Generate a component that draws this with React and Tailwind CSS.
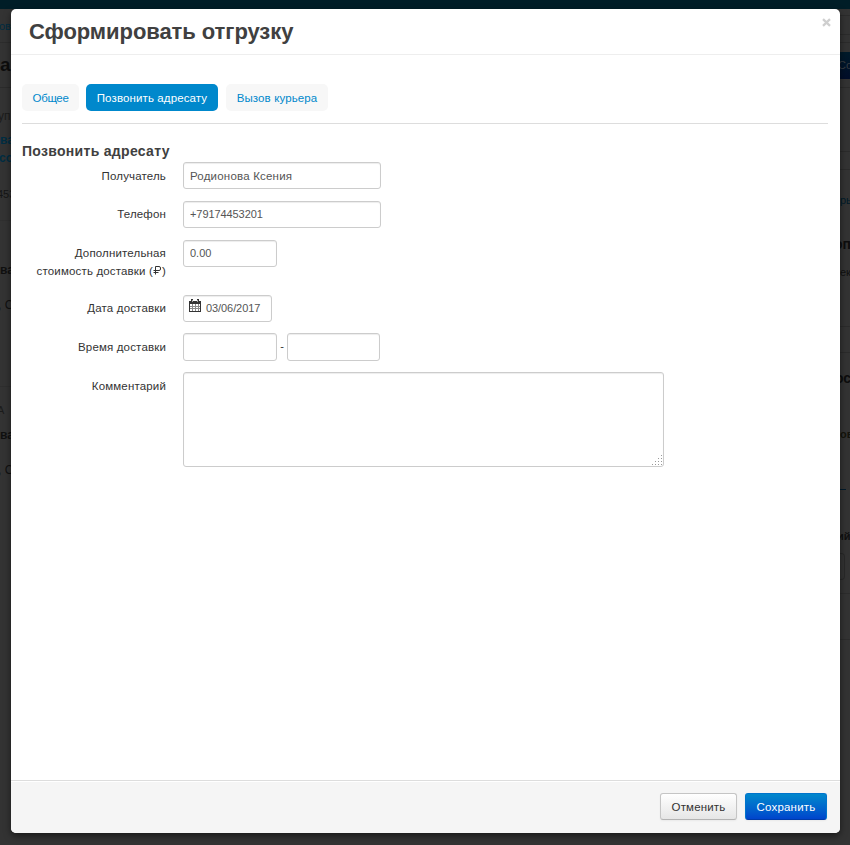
import React from "react";

const leftRows = [
  { text: "ов", cls: "h-[33px] mt-px -ml-px border-b border-[#2c2c2c] leading-[32px] text-[11px] text-[#002d42]" },
  { text: "а", cls: "h-[45px] border-b border-[#2b2b2b] leading-[44px] text-[19px] font-bold text-[#0d0d0d]" },
  { text: "уп", cls: "h-[18px] mt-[19px] -ml-0.5 leading-[18px] text-[12px] text-[#1b1b1b]" },
  { text: "ва", cls: "h-[18px] mt-[6px] leading-[18px] text-[12px] font-bold text-[#002d42]" },
  { text: "со", cls: "h-[18px] leading-[18px] -ml-px text-[12px] font-bold text-[#002d42]" },
  { text: "453", cls: "h-[54px] pt-[18px] -ml-[3px] border-b border-[#2f2f2f] leading-[18px] text-[11px] text-[#151515]" },
  { text: "ва", cls: "h-[18px] mt-[40px] leading-[18px] text-[12px] font-bold text-[#101010]" },
  { text: ", С", cls: "h-[18px] mt-[17px] -ml-[2px] leading-[18px] text-[12px] text-[#101010]" },
  { text: "", cls: "h-px mt-[72px] bg-[#2e2e2e]" },
  { text: "А", cls: "h-[18px] mt-[14px] -ml-[3px] leading-[18px] text-[11px] text-[#1b1b1b]" },
  { text: "ва", cls: "h-[18px] mt-[7px] leading-[18px] text-[12px] font-bold text-[#101010]" },
  { text: ", С", cls: "h-[18px] mt-[17px] -ml-[2px] leading-[18px] text-[12px] text-[#101010]" },
];

const rightRows = [
  { text: "", cls: "h-[20px] mt-[6px] border-y border-[#2b2b2b]" },
  { text: "", cls: "h-px mt-[7px] bg-[#2b2b2b]" },
  { text: "Со", cls: "h-[27px] mt-[9px] -ml-[2px] leading-[27px] text-[11px] text-[#383d42] bg-linear-to-b from-[#001b2a] to-[#000d29]" },
  { text: "", cls: "h-px mt-[8px] bg-[#2b2b2b]" },
  { text: "", cls: "h-[19px] mt-[63px] border-y border-[#2b2b2b]" },
  { text: "ры", cls: "h-[18px] mt-[21px] leading-[18px] text-[11px] text-[#001b29]" },
  { text: "оп", cls: "h-[18px] mt-[26px] -ml-[6px] leading-[18px] text-[14px] font-bold text-[#0d0d0d]" },
  { text: "ек", cls: "h-[18px] mt-[10px] leading-[18px] text-[11px] text-[#101010]" },
  { text: "", cls: "h-[27px] mt-[45px] border-y border-[#2b2b2b]" },
  { text: "ос", cls: "h-[18px] mt-[16px] -ml-[5px] leading-[18px] text-[14px] font-bold text-[#0d0d0d]" },
  { text: "ов", cls: "h-[18px] mt-[38px] leading-[18px] text-[11px] font-bold text-[#14140c]" },
  { text: "", cls: "h-px w-[6px] mt-[46px] bg-[#001a2b]" },
  { text: "ий", cls: "h-[18px] mt-[37px] -ml-[3px] leading-[18px] text-[11px] font-bold text-[#101010]" },
  { text: "", cls: "h-[27px] w-[5px] mt-[8px] rounded-r border-y border-r border-[#292929]" },
  { text: "", cls: "h-px mt-[13px] bg-[#2c2c2c]" },
  { text: "", cls: "h-px mt-[45px] bg-[#2c2c2c]" },
];

function Strip({ rows, className }) {
  return (
    <div className={`overflow-hidden whitespace-nowrap ${className}`} aria-hidden="true">
      {rows.map((row, i) => (
        <div key={i} className={row.cls}>{row.text}</div>
      ))}
    </div>
  );
}

const control = "block h-[27px] rounded-[3px] border border-[#cccccc] bg-white px-[6px] text-[#555555] shadow-[inset_0_1px_1px_rgba(0,0,0,0.075)] outline-none";

function Field({ label, className, labelClass = "pt-[5px]", children }) {
  return (
    <div className={`flex items-start ${className}`}>
      <div className={`mr-[17px] w-[144px] text-right text-[11.5px] leading-[18px] tracking-[0.16px] ${labelClass}`}>{label}</div>
      {children}
    </div>
  );
}

function CalendarIcon() {
  return (
    <svg width="12" height="13" viewBox="0 0 12 13" className="mt-[3px] shrink-0" shapeRendering="crispEdges">
      <path fill="#333" d="M0 2h12v3H0zM0 5h1v8H0zM11 5h1v8h-1zM1 12h10v1H1zM2 0h2v2H2zM8 0h2v2H8z" />
      <path fill="#8a8a8a" d="M3 5h1v7H3zM6 5h1v7H6zM9 5h1v7H9zM1 7h10v1H1zM1 9h10v1H1z" />
      <path fill="#aaa" d="M3 1h1v2H3zM8 1h1v2H8z" />
    </svg>
  );
}

function Ruble() {
  return (
    <svg width="9" height="9" viewBox="0 0 9 9" className="inline-block align-[0px]" fill="none" stroke="#333">
      <path d="M2.5 8.5V.5H6a1.5 1.5 0 0 1 1.5 1.5v1A1.5 1.5 0 0 1 6 4.5H.5M.5 6.5h5" />
    </svg>
  );
}

function CloseIcon() {
  return (
    <svg width="9" height="9" viewBox="0 0 9 9" fill="none" stroke="#cfcfcf" strokeWidth="2.3">
      <path d="M1 1.2l7 6.6M8 1.2L1 7.8" />
    </svg>
  );
}

function ResizeGrip() {
  return (
    <svg width="10" height="10" viewBox="0 0 10 10" className="pointer-events-none absolute right-[2px] bottom-[2px]" shapeRendering="crispEdges">
      <path fill="#999" d="M9 0h1v1H9zM6 3h1v1H6zM9 3h1v1H9zM3 6h1v1H3zM6 6h1v1H6zM9 6h1v1H9zM0 9h1v1H0zM3 9h1v1H3zM6 9h1v1H6zM9 9h1v1H9z" />
    </svg>
  );
}

export default function App() {
  return (
    <div className="flex h-[845px] w-[850px] flex-col overflow-hidden bg-[#333333] font-['Liberation_Sans',Arial,sans-serif] text-[11px] text-[#333333]">
      <div className="h-[9px] shrink-0 bg-[#001d27]" />
      <div className="flex flex-1">
        <Strip rows={leftRows} className="w-[11px]" />
        <main className="relative flex h-[824px] w-[829px] shrink-0 flex-col rounded-[5px] bg-white shadow-[0_3px_7px_rgba(0,0,0,0.5)]">
          <header className="flex h-[46px] shrink-0 items-start justify-between border-b border-[#eeeeee] pr-[9px] pl-[18px]">
            <h3 className="mt-[5px] text-[22px] leading-[36px] font-bold tracking-[-0.07px] text-[#404040]">Сформировать отгрузку</h3>
            <button className="mt-[9px]" aria-label="Закрыть"><CloseIcon /></button>
          </header>

          <section className="flex-1 px-[11px] pt-[29px]">
            <nav className="flex h-[27px] text-[11.5px] leading-[28px] tracking-[0.12px] text-[#0088cc]">
              <a className="mr-[7px] w-[57px] rounded-[5px] bg-[#f7f7f7] text-center tracking-[-0.35px]">Общее</a>
              <a className="mr-[8px] w-[132px] rounded-[5px] bg-[#0088cc] text-center text-white">Позвонить адресату</a>
              <a className="w-[102px] rounded-[5px] bg-[#f7f7f7] text-center">Вызов курьера</a>
            </nav>
            <hr className="mt-[12px] mr-px border-[#dddddd]" />
            <h4 className="mt-[17px] mb-px h-[20px] text-[14px] leading-[20px] font-bold tracking-[0.3px] text-[#404040]">Позвонить адресату</h4>

            <Field label="Получатель" className="h-[39px]">
              <input className={`${control} w-[198px] text-[11.5px] tracking-[0.2px]`} defaultValue="Родионова Ксения" />
            </Field>
            <Field label="Телефон" className="h-[39px]" labelClass="pt-[4px]">
              <input className={`${control} w-[198px] pb-[2px] tracking-[-0.08px]`} defaultValue="+79174453201" />
            </Field>
            <Field
              label={<>Дополнительная<br />стоимость доставки (<Ruble />)</>}
              className="h-[55px]"
              labelClass="pt-[4px]"
            >
              <input className={`${control} w-[94px] pb-[2px]`} defaultValue="0.00" />
            </Field>
            <Field label="Дата доставки" className="h-[38px]" labelClass="pt-[4px]">
              <div className={`${control} flex! w-[89px] px-[5px]!`}>
                <CalendarIcon />
                <span className="ml-[5px] leading-[25px] tracking-[-0.08px] whitespace-nowrap">03/06/2017</span>
              </div>
            </Field>
            <Field label="Время доставки" className="h-[39px]">
              <input className={`${control} h-[28px]! w-[94px]`} />
              <span className="w-[10px] pt-[4px] text-center leading-[18px]">-</span>
              <input className={`${control} h-[28px]! w-[93px]`} />
            </Field>
            <Field label="Комментарий" className="h-[96px]">
              <div className="relative h-[95px] w-[481px]">
                <textarea className={`${control} h-full! w-full resize-none`} />
                <ResizeGrip />
              </div>
            </Field>
          </section>

          <footer className="flex h-[53px] shrink-0 items-start justify-end gap-[8px] rounded-b-[5px] border-t border-[#dddddd] bg-[#f5f5f5] pt-[12px] pr-[13px] text-[11.5px] leading-[26px] tracking-[0.18px] shadow-[inset_0_1px_0_#ffffff]">
            <button className="h-[27px] w-[77px] rounded-[3px] border border-[#c5c5c5] border-b-[#b3b3b3] bg-linear-to-b from-white to-[#e6e6e6] shadow-[0_1px_2px_rgba(0,0,0,0.05)]">Отменить</button>
            <button className="h-[27px] w-[82px] rounded-[3px] border border-[#0074cc] border-b-[#003aa8] bg-linear-to-b from-[#0088cc] to-[#0044cc] text-white shadow-[0_1px_2px_rgba(0,0,0,0.05)]">Сохранить</button>
          </footer>
        </main>
        <Strip rows={rightRows} className="w-[10px]" />
      </div>
    </div>
  );
}
